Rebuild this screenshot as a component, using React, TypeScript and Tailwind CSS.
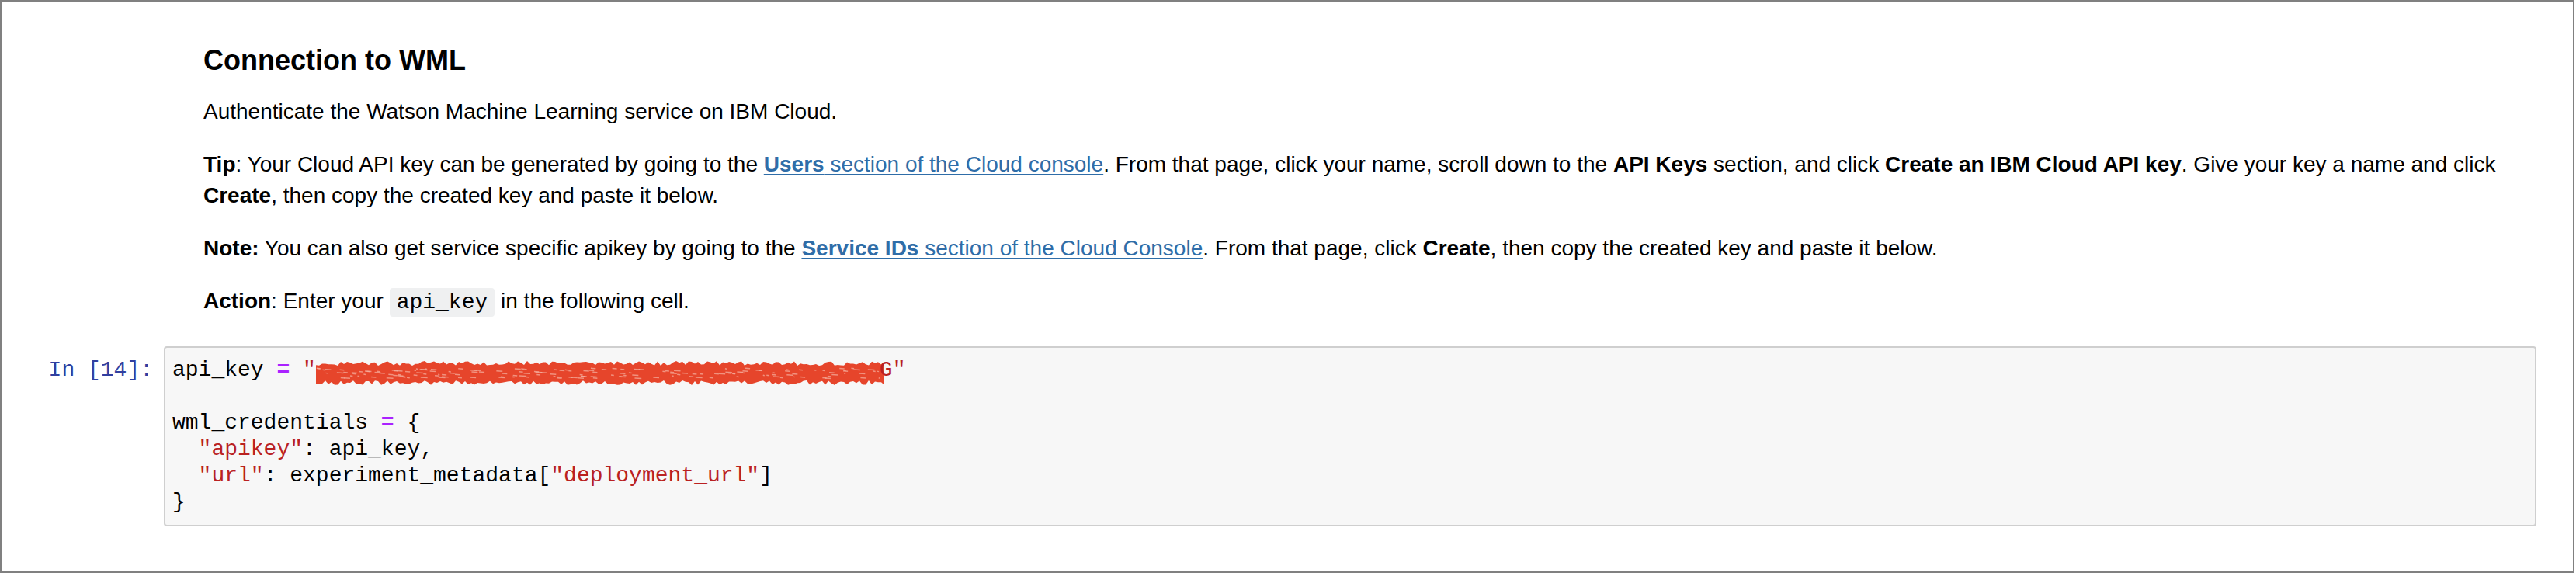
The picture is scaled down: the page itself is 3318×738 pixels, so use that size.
import { useMemo } from 'react';

const rand = (seed: number) => {
  let s = seed;
  return () => {
    s = (s * 9301 + 49297) % 233280;
    return s / 233280;
  };
};

// red marker scribble covering the key
const Scribble = () => {
  const { band, specks } = useMemo(() => {
    const r = rand(42);
    const top: string[] = [];
    const bottom: string[] = [];
    for (let x = 0; x <= 735; x += 4) {
      top.push(`${x},${(1 + r() * 6).toFixed(1)}`);
      bottom.push(`${x},${(26 + r() * 6).toFixed(1)}`);
    }
    const band = `M${top.join(' L')} L${bottom.reverse().join(' L')} Z`;
    const specks: { x: number; y: number; w: number }[] = [];
    for (let i = 0; i < 170; i++) {
      specks.push({ x: r() * 725, y: 10 + r() * 13, w: 2 + r() * 7 });
    }
    return { band, specks };
  }, []);

  return (
    <svg width="735" height="34" viewBox="0 0 735 34" className="block mt-[4px] overflow-visible">
      <path d={band} fill="#e6452b" />
      {specks.map((s, i) => (
        <line
          key={`sp-${i}`}
          x1={s.x}
          y1={s.y}
          x2={s.x + s.w}
          y2={s.y + 0.5}
          stroke="#f6b3a3"
          strokeWidth="1.5"
          opacity="0.7"
        />
      ))}
    </svg>
  );
};

const Link = ({ bold, rest }: { bold: string; rest: string }) => (
  <a className="text-[#2f6da8] underline decoration-2 underline-offset-[3px] cursor-pointer">
    <b>{bold}</b>
    {rest}
  </a>
);

const Op = () => <span className="text-[#aa22ff] font-bold">=</span>;
const Str = ({ children }: { children: string }) => (
  <span className="text-[#ba2121]">{children}</span>
);

const App = () => {
  return (
    <div className="w-[3316px] h-[738px] bg-white border-2 border-[#808080] text-black font-['Liberation_Sans',Arial,Helvetica,sans-serif]">
      <div className="pl-[260px] pr-[48px] pt-[56px]">
        <h3 className="text-[36px] font-bold leading-[40px]">Connection to WML</h3>

        <p className="mt-[26px] text-[28px] leading-[40px]">
          Authenticate the Watson Machine Learning service on IBM Cloud.
        </p>

        <p className="mt-[28px] text-[28px] leading-[40px]">
          <b>Tip</b>: Your Cloud API key can be generated by going to the{' '}
          <Link bold="Users" rest=" section of the Cloud console" />. From that page, click your
          name, scroll down to the <b>API Keys</b> section, and click{' '}
          <b>Create an IBM Cloud API key</b>. Give your key a name and click <b>Create</b>, then
          copy the created key and paste it below.
        </p>

        <p className="mt-[28px] text-[28px] leading-[40px]">
          <b>Note:</b> You can also get service specific apikey by going to the{' '}
          <Link bold="Service IDs" rest=" section of the Cloud Console" />. From that page, click{' '}
          <b>Create</b>, then copy the created key and paste it below.
        </p>

        <p className="mt-[28px] text-[28px] leading-[40px]">
          <b>Action</b>: Enter your{' '}
          <code className="font-['Liberation_Mono',monospace] bg-[#eff0f1] rounded-[4px] px-[9px] py-[3px]">
            api_key
          </code>{' '}
          in the following cell.
        </p>
      </div>

      <div className="flex mt-[36px] pr-[47px]">
        <div className="w-[209px] shrink-0 pr-[14px] pt-[14px] text-right font-['Liberation_Mono',monospace] text-[28px] leading-[34px] text-[#303f9f]">
          In [14]:
        </div>
        <div className="flex-1 bg-[#f7f7f7] border-2 border-[#cfcfcf] rounded-[4px] py-[12px] px-[9px]">
          <pre className="font-['Liberation_Mono',monospace] text-[28px] leading-[34px] text-black">
            <div className="flex">
              <span>api_key </span>
              <Op />
              <span> </span>
              <Str>"</Str>
              <span className="w-[726px] h-[34px]">
                <Scribble />
              </span>
              <Str>G"</Str>
            </div>
            <div className="h-[34px]" />
            <div>
              wml_credentials <Op /> {'{'}
            </div>
            <div>
              {'  '}
              <Str>"apikey"</Str>: api_key,
            </div>
            <div>
              {'  '}
              <Str>"url"</Str>: experiment_metadata[<Str>"deployment_url"</Str>]
            </div>
            <div>{'}'}</div>
          </pre>
        </div>
      </div>
    </div>
  );
};

export default App;
